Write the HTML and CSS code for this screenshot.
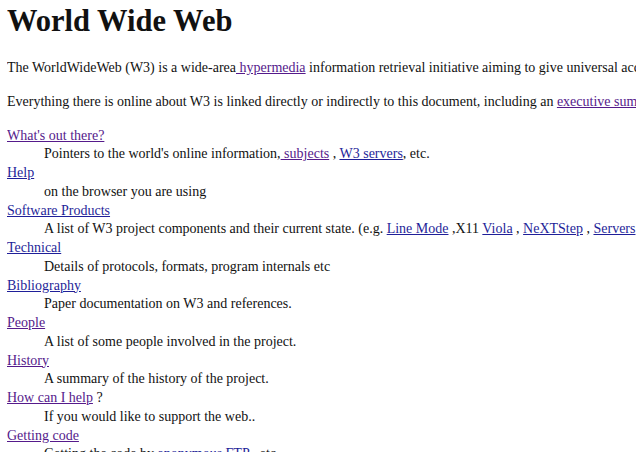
FILE: index.html
```html
<!DOCTYPE html>
<html>
<head>
  <meta charset="utf-8">
  <title>The World Wide Web project</title>
  <link rel="stylesheet" href="styles.css">
</head>
<body>

  <h1>World Wide Web</h1>

  <p>The WorldWideWeb (W3) is a wide-area<a href="#" class="seen"> hypermedia</a> information retrieval initiative aiming to give universal access to a large universe of documents.</p>

  <p>Everything there is online about W3 is linked directly or indirectly to this document, including an <a href="#" class="seen">executive summary</a> of the project, <a href="#">Mailing lists</a>, <a href="#">Policy</a>, November's <a href="#">W3 news</a>, <a href="#">Frequently Asked Questions</a>.</p>

  <dl>
    <dt><a href="#" class="seen">What's out there?</a></dt>
    <dd>Pointers to the world's online information,<a href="#" class="seen"> subjects</a> , <a href="#">W3 servers</a>, etc.</dd>
    <dt><a href="#">Help</a></dt>
    <dd>on the browser you are using</dd>
    <dt><a href="#">Software Products</a></dt>
    <dd>A list of W3 project components and their current state. (e.g. <a href="#">Line Mode</a> ,X11 <a href="#">Viola</a> , <a href="#">NeXTStep</a> , <a href="#">Servers</a> , <a href="#">Tools</a> ,<a href="#"> Mail robot</a> ,<a href="#"> Library</a> )</dd>
    <dt><a href="#">Technical</a></dt>
    <dd>Details of protocols, formats, program internals etc</dd>
    <dt><a href="#">Bibliography</a></dt>
    <dd>Paper documentation on W3 and references.</dd>
    <dt><a href="#" class="seen">People</a></dt>
    <dd>A list of some people involved in the project.</dd>
    <dt><a href="#" class="seen">History</a></dt>
    <dd>A summary of the history of the project.</dd>
    <dt><a href="#" class="seen">How can I help</a> ?</dt>
    <dd>If you would like to support the web..</dd>
    <dt><a href="#" class="seen">Getting code</a></dt>
    <dd>Getting the code by<a href="#"> anonymous FTP</a> , etc.</dd>
  </dl>

</body>
</html>
```

FILE: styles.css
```css
html {
  overflow: hidden;
}

body {
  margin: 5px 0 0 7px;
  font-family: "Liberation Serif", "Times New Roman", serif;
  font-size: 14px;
  line-height: 18.75px;
  color: #111;
  white-space: nowrap;
}

h1 {
  margin: 0 0 21px;
  font-size: 30.5px;
  line-height: 33px;
}

p {
  margin: 15px 0;
}

dl {
  margin: 13px 0 0;
}

dd {
  margin-left: 37px;
}

a {
  color: #1f1f99;
}

a.seen {
  color: #551a8b;
}
```
